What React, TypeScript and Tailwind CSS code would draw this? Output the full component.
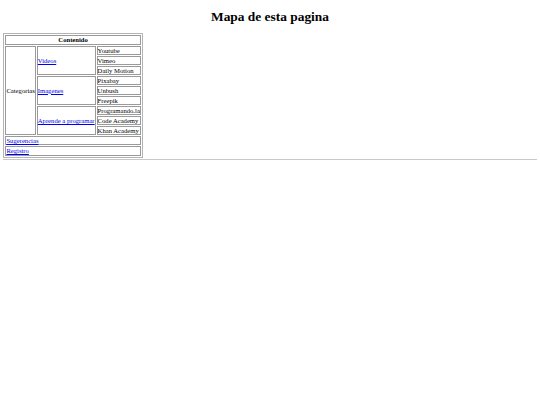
import React from "react";

const cell = "border border-[#9a9a9a] p-0 align-middle text-left whitespace-nowrap";
const link = "text-[#0000ee] underline";

export default function App() {
  return (
    <div className="min-h-[405px] bg-white px-[3.4px] pt-[9px] text-black" style={{ fontFamily: '"Liberation Serif", "Times New Roman", serif' }}>
      <h1 className="text-center text-[13.4px] font-bold leading-[15.4px] mb-[9px]">Mapa de esta pagina</h1>
      <table className="border-separate border-spacing-[1px] border border-[#b4b4b4] text-[6.65px] leading-[7.1px]">
        <tbody>
          <tr>
            <th colSpan={3} className="border border-[#9a9a9a] p-0 text-center font-bold">Contenido</th>
          </tr>
          <tr>
            <td rowSpan={9} className={cell}>Categorias</td>
            <td rowSpan={3} className={cell}><a className={link}>Videos</a></td>
            <td className={cell}>Youtube</td>
          </tr>
          <tr><td className={cell}>Vimeo</td></tr>
          <tr><td className={cell}>Daily Motion</td></tr>
          <tr>
            <td rowSpan={3} className={cell}><a className={link}>Imagenes</a></td>
            <td className={cell}>Pixabay</td>
          </tr>
          <tr><td className={cell}>Unbush</td></tr>
          <tr><td className={cell}>Freepik</td></tr>
          <tr>
            <td rowSpan={3} className={cell}><a className={link}>Aprende a programar</a></td>
            <td className={cell}>Programando.la</td>
          </tr>
          <tr><td className={cell}>Code Academy</td></tr>
          <tr><td className={cell}>Khan Academy</td></tr>
          <tr><td colSpan={3} className={cell}><a className={link}>Sugerencias</a></td></tr>
          <tr><td colSpan={3} className={cell}><a className={link}>Registro</a></td></tr>
        </tbody>
      </table>
      <hr className="mt-[1.2px] border-t border-[#c8c8c8]" />
    </div>
  );
}
